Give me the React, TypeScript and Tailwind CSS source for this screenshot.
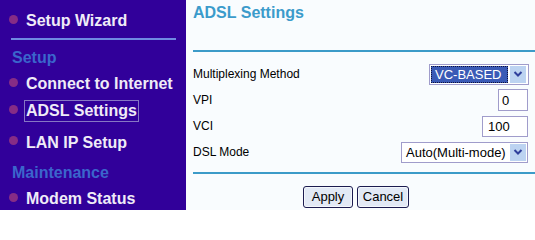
import React from "react";

function Dot() {
  return <span className="ml-[9px] mr-[8px] h-[9px] w-[9px] shrink-0 -translate-y-[2px] rounded-full bg-[#862c86] blur-[0.6px]" />;
}

function NavItem({ label, h, active }: { label: string; h: string; active?: boolean }) {
  return (
    <div className={`flex items-center ${h}`}>
      <Dot />
      {active ? (
        <span className="-ml-[2px] flex h-[22px] items-center border border-[#8676c4] px-[1px] leading-none">{label}</span>
      ) : (
        <span className="leading-none">{label}</span>
      )}
    </div>
  );
}

function Arrow() {
  return (
    <span className="flex h-[17px] w-[16px] items-center justify-center bg-[#bcd3f1]">
      <svg width="10" height="8" viewBox="0 0 10 8">
        <path d="M1.5 2 L5 5.5 L8.5 2" fill="none" stroke="#2f3f9c" strokeWidth="2" />
      </svg>
    </span>
  );
}

function Row({ label, children }: { label: string; children: React.ReactNode }) {
  return (
    <div className="flex h-[26px] items-center justify-between">
      <span className="text-[12px] leading-none text-black">{label}</span>
      {children}
    </div>
  );
}

export default function App() {
  return (
    <div className="flex h-[210px] w-[535px] overflow-hidden font-['Liberation_Sans',Arial,sans-serif]">
      <aside className="flex w-[186px] shrink-0 flex-col bg-[#31009a] text-[16px] font-bold text-[#efebf7]">
        <div className="h-[7px] shrink-0" />
        <NavItem label="Setup Wizard" h="h-[28px] shrink-0" />
        <div className="mt-[3px] flex h-[2px] shrink-0 pl-[11px]">
          <div className="h-[2px] w-[165px] bg-[#6f8ae2]" />
        </div>
        <div className="mt-[5px] flex h-[25px] shrink-0 items-center pl-[12px] leading-none text-[#3b66cc]">Setup</div>
        <NavItem label="Connect to Internet" h="h-[28px] shrink-0" />
        <NavItem label="ADSL Settings" h="h-[26px] shrink-0" active />
        <div className="mt-[4px] shrink-0">
          <NavItem label="LAN IP Setup" h="h-[29px]" />
        </div>
        <div className="flex h-[32px] shrink-0 items-center pl-[12px] leading-none text-[#3b66cc]">Maintenance</div>
        <NavItem label="Modem Status" h="h-[20px] shrink-0" />
      </aside>

      <main className="flex-1 bg-[#f9fcfe] pl-[7px] pr-[6px]">
        <h1 className="mt-[5px] h-[16px] text-[16px] font-bold leading-none text-[#3b9bcb]">ADSL Settings</h1>
        <div className="-mr-[6px] mt-[29px] h-[2px] bg-[#3c9bc8]" />

        <div className="mt-[9px]">
          <Row label="Multiplexing Method">
            <div className="flex h-[21px] w-[100px] items-center gap-[2px] border border-[#a09ccb] bg-white px-[1px]">
              <span className="flex h-[17px] w-[77px] items-center bg-[#3a5ab6] pl-[4px] text-[13px] leading-none text-white outline-1 -outline-offset-1 outline-dotted outline-[#10103a]">
                VC-BASED
              </span>
              <Arrow />
            </div>
          </Row>
          <Row label="VPI">
            <div className="mr-[1px] flex h-[22px] w-[30px] items-center border border-[#a09ccb] bg-white pl-[3px] text-[13px] leading-none text-black">
              0
            </div>
          </Row>
          <Row label="VCI">
            <div className="mr-[1px] flex h-[21px] w-[46px] items-center border border-[#a09ccb] bg-white pl-[5px] text-[13px] leading-none text-black">
              100
            </div>
          </Row>
          <Row label="DSL Mode">
            <div className="mr-[1px] flex h-[21px] w-[127px] items-center justify-between border border-[#a09ccb] bg-white pl-[4px] pr-[1px] text-[13px] leading-none text-black">
              <span>Auto(Multi-mode)</span>
              <Arrow />
            </div>
          </Row>
        </div>

        <div className="-mr-[6px] mt-[7px] h-[2px] bg-[#3c9bc8]" />

        <div className="ml-[110px] mt-[12px] flex gap-[4px]">
          <button className="h-[22px] w-[50px] rounded-[3px] border border-[#1c1c50] bg-[#e2e9f5] pb-[2px] text-[13px] leading-none text-black shadow-[inset_0_0_0_1px_#f4f7fc]">
            Apply
          </button>
          <button className="h-[22px] w-[52px] rounded-[3px] border border-[#1c1c50] bg-[#e2e9f5] pb-[2px] text-[13px] leading-none text-black shadow-[inset_0_0_0_1px_#f4f7fc]">
            Cancel
          </button>
        </div>
      </main>
    </div>
  );
}
